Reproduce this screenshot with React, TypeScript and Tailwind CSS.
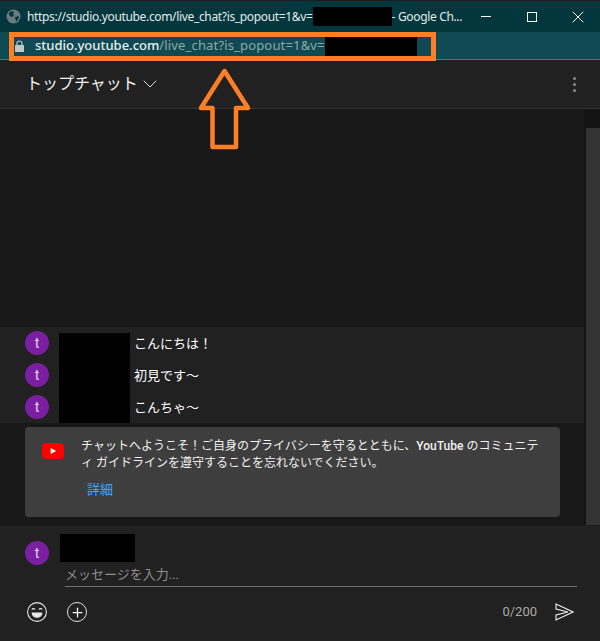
import { X, ChevronDown, Plus } from "lucide-react"

const messages = ["こんにちは！", "初見です～", "こんちゃ～"]

const sans = "font-['Noto_Sans','Noto_Sans_CJK_JP',sans-serif]"
const yt = "font-['Roboto','Noto_Sans_CJK_JP',sans-serif]"

function Avatar() {
    return (
        <div className={`w-6 h-6 shrink-0 rounded-full bg-[#7b1fa2] flex items-center justify-center text-[14px] text-[#e6d5ec] ${yt}`}>t</div>
    )
}

function Redacted({ className }: { className: string }) {
    return <div className={`absolute bg-black ${className}`} />
}

export default function App() {
    return (
        <div className={`relative w-[600px] h-[641px] overflow-hidden flex flex-col bg-[#181818] ${sans}`}>
            {/* window title bar */}
            <div className="h-8 shrink-0 bg-[#03363d] flex items-center pl-[6px] text-[12px] text-[#e3eaeb] border-t border-[#1d1d1d]">
                <svg width="15" height="15" viewBox="0 0 15 15" className="mr-[6px] shrink-0">
                    <circle cx="7.5" cy="7.5" r="7" fill="#6d7a7d" />
                    <path d="M3 3.500l3-1.500 2 1-1 2 1 2-2.500 1-2.500-2zM9 8l3.500-1 .5 2-2.500 3.500-1-1.500z" fill="#03363d" />
                </svg>
                <span className="whitespace-nowrap w-[436px] shrink-0 tracking-[-0.34px]">https://studio.youtube.com/live_chat?is_popout=1&amp;v=<span className="inline-block w-[79px]" />- Google Ch...</span>
                <div className="ml-[18px] flex items-center">
                    <div className="w-[10px] h-px bg-white mr-[36px]" />
                    <div className="w-[10px] h-[10px] border border-white mr-[31px]" />
                    <X size={20} strokeWidth={1.2} className="text-white" />
                </div>
            </div>

            {/* address bar */}
            <div className="h-7 shrink-0 bg-[#0f4a52] border-b border-[#3f7e85] flex items-center pl-[15px] text-[13px]">
                <svg width="9" height="12" viewBox="0 0 9 12" className="mr-[11px] shrink-0">
                    <path d="M2 5V3.500a2.500 2.500 0 0 1 5 0V5" fill="none" stroke="#c0c8c9" strokeWidth="1.200" />
                    <rect y="5" width="9" height="7" rx="0.500" fill="#c0c8c9" />
                </svg>
                <span className="font-medium text-[#e8eeee]">studio.youtube.com</span>
                <span className="text-[#8fa7aa] tracking-[0.16px]">/live_chat?is_popout=1&amp;v=</span>
            </div>

            {/* chat header */}
            <div className="h-[49px] shrink-0 bg-[#212121] border-b border-[#343434] flex items-center pl-[26px] pr-[24px]">
                <span className={`text-[#f1f1f1] text-[16px] ${yt}`}>トップチャット</span>
                <ChevronDown size={24} strokeWidth={1} className="text-[#dcdcdc]" />
                <div className="ml-auto flex flex-col gap-[3px]">
                    <div className="w-[3px] h-[3px] rounded-full bg-[#8a8a8a]" />
                    <div className="w-[3px] h-[3px] rounded-full bg-[#8a8a8a]" />
                    <div className="w-[3px] h-[3px] rounded-full bg-[#8a8a8a]" />
                </div>
            </div>

            {/* messages */}
            <div className="flex-1 min-h-0 flex">
                <div className="flex-1 min-w-0 flex flex-col justify-end pb-2">
                    <div className="bg-[#212121]">
                        {messages.map((m) => (
                            <div key={m} className="h-8 flex items-center pl-[25px]">
                                <Avatar />
                                <span className={`ml-[85px] pt-[2px] text-[13px] text-white ${yt}`}>{m}</span>
                            </div>
                        ))}
                    </div>
                    <div className="mt-1 ml-[25px] mr-[24px] h-[90px] bg-[#3e3e3e] rounded-[4px] flex pl-[17px] pr-[14px] pt-[11px]">
                        <svg width="22" height="16" viewBox="0 0 22 16" className="mt-[5px] shrink-0">
                            <rect width="22" height="16" rx="4" fill="#ff0000" />
                            <path d="M8.700 5l5.500 3-5.500 3z" fill="#fff" />
                        </svg>
                        <div className="ml-[17px]">
                            <p className={`text-[12px] leading-[17px] text-[#f1f1f1] ${yt}`}>
                                チャットへようこそ！ご自身のプライバシーを守るとともに、<span className="font-medium">YouTube</span> のコミュニテ<br />ィ ガイドラインを遵守することを忘れないでください。
                            </p>
                            <div className={`mt-[8px] ml-[6px] text-[13px] text-[#3ea6ff] ${yt}`}>詳細</div>
                        </div>
                    </div>
                </div>
                {/* scrollbar */}
                <div className="w-4 shrink-0 bg-[#141414] pt-[19px] pl-[2px]">
                    <div className="h-full bg-[#333333]" />
                </div>
            </div>

            {/* input panel */}
            <div className="h-[116px] shrink-0 bg-[#212121] border-t border-[#1c1c1c] pl-[25px] pr-[23px] flex flex-col">
                <div className="pt-[15px]">
                    <Avatar />
                </div>
                <div className={`ml-[40px] mt-[1px] h-[21px] border-b border-[#717171] text-[13px] leading-[18px] text-[#909090] ${yt}`}>メッセージを入力...</div>
                <div className="mt-[15px] flex items-center">
                    <svg width="20" height="20" viewBox="0 0 20 20" fill="none" stroke="#e8e8e8" strokeWidth="1.100" className="ml-[2px]">
                        <circle cx="10" cy="10" r="9.400" />
                        <path d="M4.800 7.500c.6-1.200 2.600-1.200 3.200 0M12 7.500c.6-1.200 2.600-1.200 3.200 0" />
                        <path d="M5.200 11h9.600c0 2.500-2.100 4.300-4.800 4.300s-4.800-1.800-4.800-4.300z" fill="#e8e8e8" />
                    </svg>
                    <div className="ml-[20px] w-5 h-5 rounded-full border border-[#e0e0e0] flex items-center justify-center">
                        <Plus size={15} strokeWidth={2} className="text-white" />
                    </div>
                    <span className={`ml-auto text-[13px] text-[#aaaaaa] ${yt}`}>0/200</span>
                    <svg width="19" height="18" viewBox="0 0 19 18" fill="none" stroke="#f0f0f0" strokeWidth="1.100" className="ml-[18px] mr-[3px]">
                        <path d="M1 1l17 8-17 8v-5l12-3-12-3z" />
                    </svg>
                </div>
            </div>

            {/* redactions */}
            <Redacted className="left-[313px] top-[7px] w-[79px] h-[19px]" />
            <Redacted className="left-[325px] top-[37px] w-[92px] h-[19px]" />
            <Redacted className="left-[59px] top-[333px] w-[71px] h-[90px]" />
            <Redacted className="left-[60px] top-[534px] w-[75px] h-[28px]" />

            {/* annotation */}
            <div className="absolute left-[9px] top-[32px] w-[427px] h-[29px] border-[5px] border-[#ff7f27]" />
            <svg width="54" height="86" viewBox="0 0 54 86" fill="none" className="absolute left-[198px] top-[66px]">
                <path d="M26.500 5L50 42H38V81H14.500V42H3z" stroke="#ff7f27" strokeWidth="4.500" strokeLinejoin="round" />
            </svg>
        </div>
    )
}
